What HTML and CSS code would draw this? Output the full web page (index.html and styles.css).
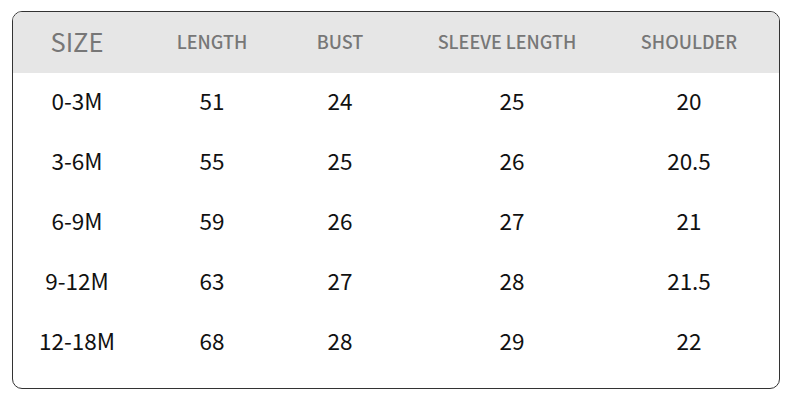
FILE: index.html
```html
<!DOCTYPE html>
<html>
<head>
<meta charset="utf-8">
<link rel="stylesheet" href="styles.css">
</head>
<body>
<div class="chart">
  <div class="row head">
    <div class="cell size">SIZE</div>
    <div class="cell">LENGTH</div>
    <div class="cell">BUST</div>
    <div class="cell sleeve">SLEEVE LENGTH</div>
    <div class="cell">SHOULDER</div>
  </div>
  <div class="row"><div class="cell">0-3M</div><div class="cell">51</div><div class="cell">24</div><div class="cell">25</div><div class="cell">20</div></div>
  <div class="row"><div class="cell">3-6M</div><div class="cell">55</div><div class="cell">25</div><div class="cell">26</div><div class="cell">20.5</div></div>
  <div class="row"><div class="cell">6-9M</div><div class="cell">59</div><div class="cell">26</div><div class="cell">27</div><div class="cell">21</div></div>
  <div class="row"><div class="cell">9-12M</div><div class="cell">63</div><div class="cell">27</div><div class="cell">28</div><div class="cell">21.5</div></div>
  <div class="row"><div class="cell">12-18M</div><div class="cell">68</div><div class="cell">28</div><div class="cell">29</div><div class="cell">22</div></div>
</div>
</body>
</html>
```
FILE: styles.css
```css
html, body {
  margin: 0;
  padding: 0;
  background: #ffffff;
}
body {
  font-family: "Noto Sans CJK SC", "Noto Sans", sans-serif;
  color: #111111;
}
.chart {
  box-sizing: border-box;
  width: 768px;
  height: 378px;
  margin: 11px 0 0 12px;
  border: 1px solid #333333;
  border-radius: 10px;
  overflow: hidden;
  padding-bottom: 16px;
}
.row {
  display: grid;
  grid-template-columns: 128px 142px 114px 230px 124px;
  height: 60px;
  align-items: center;
  font-size: 22.5px;
}
.row .cell {
  text-align: center;
  line-height: 1;
  padding-bottom: 6px;
}
.head {
  height: 61px;
  background: #e6e6e6;
  color: #777777;
  font-size: 18px;
  font-weight: 500;
}
.head .cell {
  padding-bottom: 4px;
}
.head .size {
  font-size: 25.5px;
  font-weight: 400;
}
.head .sleeve {
  padding-right: 10px;
}
```
